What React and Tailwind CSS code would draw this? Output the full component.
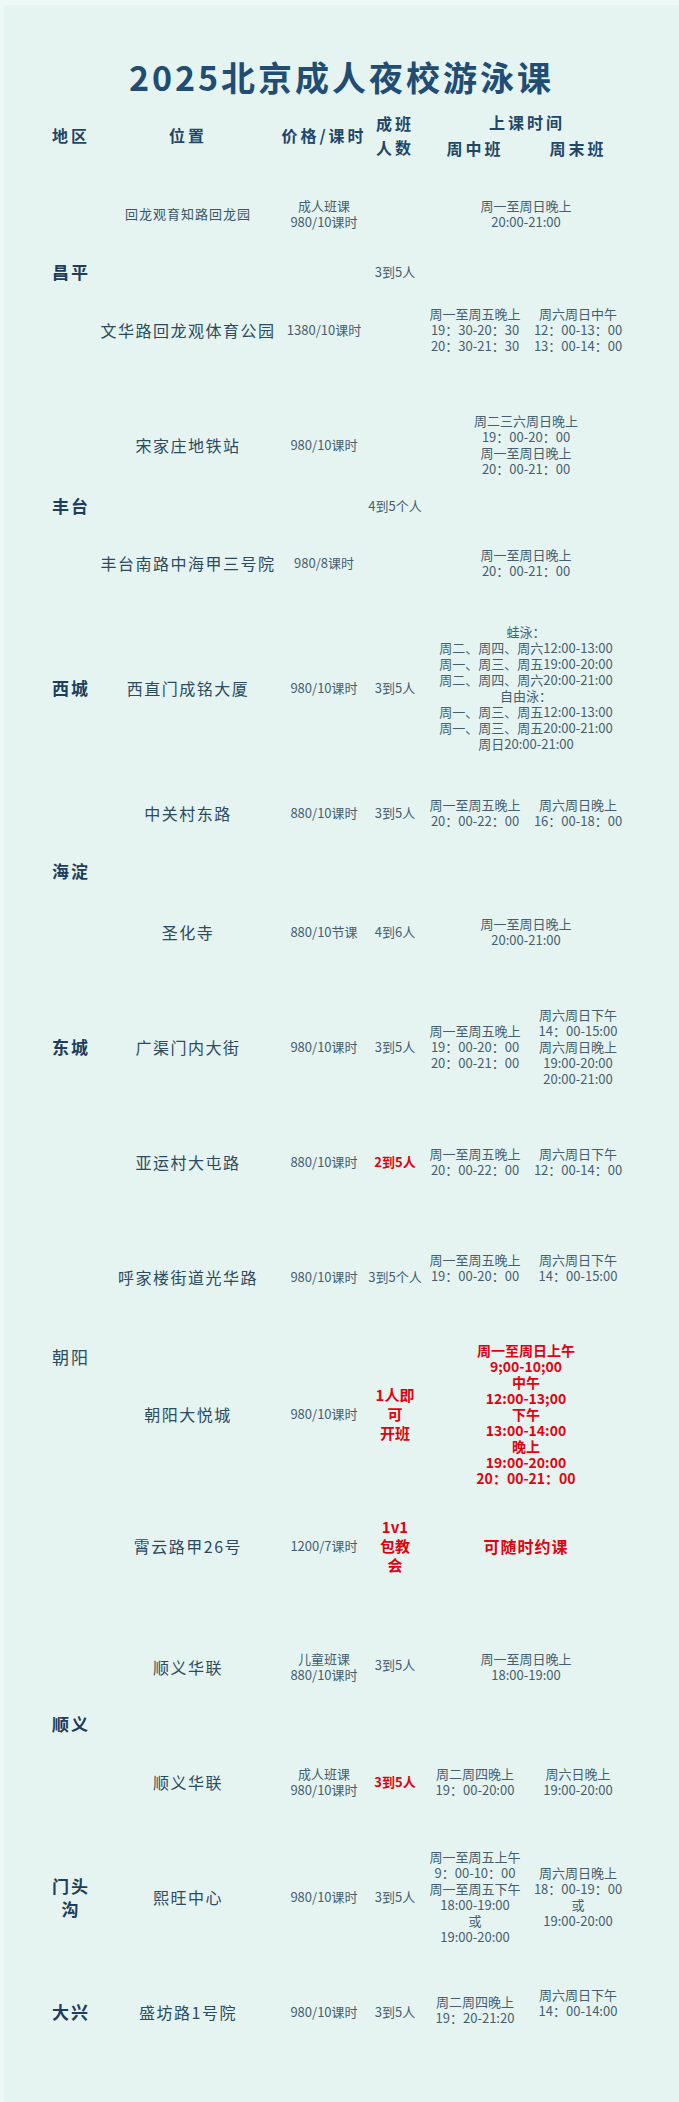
import React from "react";

const cell = "flex flex-col items-center justify-center text-center whitespace-nowrap";
const small = "text-[13px] leading-4 text-[#465e70]";
const place = "text-[16px] tracking-[1.5px] text-[#2c4a60]";
const region = "text-[17px] font-bold tracking-[2px] text-[#1d3e5c]";
const red = "font-bold text-[#e5000f]";

function Lines({ items, className = "" }) {
  return (
    <div className={`${cell} ${className}`}>
      {items.map((t, i) => (
        <div key={i}>{t}</div>
      ))}
    </div>
  );
}

export default function App() {
  return (
    <div className="min-h-[2102px] w-full bg-[#e5f4f0] border-t-[5px] border-l-[4px] border-[#eef8f5] pt-[52px] font-['Noto_Sans_CJK_SC',sans-serif]">
      {/* Title */}
      <h1 className="h-[40px] text-center text-[34px] font-bold leading-[40px] tracking-[3px] text-[#214d72]">
        2025北京成人夜校游泳课
      </h1>

      {/* Header */}
      <div className="mt-[13px] ml-[43px] grid h-[46px] grid-cols-[48px_186px_86px_56px_104px_102px] text-[16px] font-bold tracking-[3px] text-[#1f4768]">
        <div className={cell}>地区</div>
        <div className={cell}>位置</div>
        <div className={cell}>价格/课时</div>
        <div className={`${cell} leading-[24px]`}>
          <div>成班</div>
          <div>人数</div>
        </div>
        <div className="col-span-2 flex flex-col items-center justify-center leading-[24px]">
          <div className="pl-[2px]">上课时间</div>
          <div className="grid w-full grid-cols-[104px_102px] pt-[2px]">
            <div className="text-center">周中班</div>
            <div className="text-center">周末班</div>
          </div>
        </div>
      </div>

      {/* Table body */}
      <div className="ml-[43px] grid grid-cols-[48px_186px_86px_56px_104px_102px] grid-rows-[116px_115px_115px_122px_128px_122px_115px_115px_115px_126px_137px_127px_115px_115px_115px_116px]">
        {/* regions */}
        <div className={`${cell} ${region} col-start-1 row-start-1 row-span-2`}>昌平</div>
        <div className={`${cell} ${region} col-start-1 row-start-3 row-span-2`}>丰台</div>
        <div className={`${cell} ${region} col-start-1 row-start-5`}>西城</div>
        <div className={`${cell} ${region} col-start-1 row-start-6 row-span-2`}>海淀</div>
        <div className={`${cell} ${region} col-start-1 row-start-8`}>东城</div>
        <div className={`${cell} col-start-1 row-start-9 row-span-4 text-[17px] tracking-[2px] text-[#2c4a60]`}>朝阳</div>
        <div className={`${cell} ${region} col-start-1 row-start-13 row-span-2`}>顺义</div>
        <div className={`${cell} ${region} col-start-1 row-start-15 leading-[23px]`}>
          <div>门头</div>
          <div>沟</div>
        </div>
        <div className={`${cell} ${region} col-start-1 row-start-16`}>大兴</div>

        {/* row 1 */}
        <div className={`${cell} col-start-2 row-start-1 text-[13px] tracking-[1px] text-[#3a556a]`}>回龙观育知路回龙园</div>
        <Lines items={["成人班课", "980/10课时"]} className={`${small} col-start-3 row-start-1`} />
        <div className={`${cell} ${small} col-start-4 row-start-1 row-span-2`}>3到5人</div>
        <Lines items={["周一至周日晚上", "20:00-21:00"]} className={`${small} col-start-5 col-span-2 row-start-1`} />

        {/* row 2 */}
        <div className={`${cell} ${place} col-start-2 row-start-2`}>文华路回龙观体育公园</div>
        <div className={`${cell} ${small} col-start-3 row-start-2`}>1380/10课时</div>
        <Lines items={["周一至周五晚上", "19：30-20：30", "20：30-21：30"]} className={`${small} col-start-5 row-start-2`} />
        <Lines items={["周六周日中午", "12：00-13：00", "13：00-14：00"]} className={`${small} col-start-6 row-start-2`} />

        {/* row 3 */}
        <div className={`${cell} ${place} col-start-2 row-start-3`}>宋家庄地铁站</div>
        <div className={`${cell} ${small} col-start-3 row-start-3`}>980/10课时</div>
        <div className={`${cell} ${small} col-start-4 row-start-3 row-span-2`}>4到5个人</div>
        <Lines
          items={["周二三六周日晚上", "19：00-20：00", "周一至周日晚上", "20：00-21：00"]}
          className={`${small} col-start-5 col-span-2 row-start-3`}
        />

        {/* row 4 */}
        <div className={`${cell} ${place} col-start-2 row-start-4`}>丰台南路中海甲三号院</div>
        <div className={`${cell} ${small} col-start-3 row-start-4`}>980/8课时</div>
        <Lines items={["周一至周日晚上", "20：00-21：00"]} className={`${small} col-start-5 col-span-2 row-start-4`} />

        {/* row 5 */}
        <div className={`${cell} ${place} col-start-2 row-start-5`}>西直门成铭大厦</div>
        <div className={`${cell} ${small} col-start-3 row-start-5`}>980/10课时</div>
        <div className={`${cell} ${small} col-start-4 row-start-5`}>3到5人</div>
        <Lines
          items={[
            "蛙泳：",
            "周二、周四、周六12:00-13:00",
            "周一、周三、周五19:00-20:00",
            "周二、周四、周六20:00-21:00",
            "自由泳：",
            "周一、周三、周五12:00-13:00",
            "周一、周三、周五20:00-21:00",
            "周日20:00-21:00",
          ]}
          className={`${small} col-start-5 col-span-2 row-start-5`}
        />

        {/* row 6 */}
        <div className={`${cell} ${place} col-start-2 row-start-6`}>中关村东路</div>
        <div className={`${cell} ${small} col-start-3 row-start-6`}>880/10课时</div>
        <div className={`${cell} ${small} col-start-4 row-start-6`}>3到5人</div>
        <Lines items={["周一至周五晚上", "20：00-22：00"]} className={`${small} col-start-5 row-start-6`} />
        <Lines items={["周六周日晚上", "16：00-18：00"]} className={`${small} col-start-6 row-start-6`} />

        {/* row 7 */}
        <div className={`${cell} ${place} col-start-2 row-start-7`}>圣化寺</div>
        <div className={`${cell} ${small} col-start-3 row-start-7`}>880/10节课</div>
        <div className={`${cell} ${small} col-start-4 row-start-7`}>4到6人</div>
        <Lines items={["周一至周日晚上", "20:00-21:00"]} className={`${small} col-start-5 col-span-2 row-start-7`} />

        {/* row 8 */}
        <div className={`${cell} ${place} col-start-2 row-start-8`}>广渠门内大街</div>
        <div className={`${cell} ${small} col-start-3 row-start-8`}>980/10课时</div>
        <div className={`${cell} ${small} col-start-4 row-start-8`}>3到5人</div>
        <Lines items={["周一至周五晚上", "19：00-20：00", "20：00-21：00"]} className={`${small} col-start-5 row-start-8`} />
        <Lines
          items={["周六周日下午", "14：00-15:00", "周六周日晚上", "19:00-20:00", "20:00-21:00"]}
          className={`${small} col-start-6 row-start-8`}
        />

        {/* row 9 */}
        <div className={`${cell} ${place} col-start-2 row-start-9`}>亚运村大屯路</div>
        <div className={`${cell} ${small} col-start-3 row-start-9`}>880/10课时</div>
        <div className={`${cell} text-[13px] leading-4 ${red} col-start-4 row-start-9`}>2到5人</div>
        <Lines items={["周一至周五晚上", "20：00-22：00"]} className={`${small} col-start-5 row-start-9`} />
        <Lines items={["周六周日下午", "12：00-14：00"]} className={`${small} col-start-6 row-start-9`} />

        {/* row 10 */}
        <div className={`${cell} ${place} col-start-2 row-start-10 pb-[10px]`}>呼家楼街道光华路</div>
        <div className={`${cell} ${small} col-start-3 row-start-10 pb-[10px]`}>980/10课时</div>
        <div className={`${cell} ${small} col-start-4 row-start-10 pb-[10px]`}>3到5个人</div>
        <Lines items={["周一至周五晚上", "19：00-20：00"]} className={`${small} col-start-5 row-start-10 pb-[28px]`} />
        <Lines items={["周六周日下午", "14：00-15:00"]} className={`${small} col-start-6 row-start-10 pb-[28px]`} />

        {/* row 11 */}
        <div className={`${cell} ${place} col-start-2 row-start-11`}>朝阳大悦城</div>
        <div className={`${cell} ${small} col-start-3 row-start-11`}>980/10课时</div>
        <Lines items={["1人即", "可", "开班"]} className={`text-[15px] leading-[19px] ${red} col-start-4 row-start-11`} />
        <Lines
          items={[
            "周一至周日上午",
            "9;00-10;00",
            "中午",
            "12:00-13;00",
            "下午",
            "13:00-14:00",
            "晚上",
            "19:00-20:00",
            "20：00-21：00",
          ]}
          className={`text-[14px] leading-[16px] ${red} col-start-5 col-span-2 row-start-11`}
        />

        {/* row 12 */}
        <div className={`${cell} ${place} col-start-2 row-start-12`}>霄云路甲26号</div>
        <div className={`${cell} ${small} col-start-3 row-start-12`}>1200/7课时</div>
        <Lines items={["1v1", "包教", "会"]} className={`text-[15px] leading-[19px] ${red} col-start-4 row-start-12`} />
        <div className={`${cell} text-[16px] tracking-[1px] ${red} col-start-5 col-span-2 row-start-12`}>可随时约课</div>

        {/* row 13 */}
        <div className={`${cell} ${place} col-start-2 row-start-13`}>顺义华联</div>
        <Lines items={["儿童班课", "880/10课时"]} className={`${small} col-start-3 row-start-13`} />
        <div className={`${cell} ${small} col-start-4 row-start-13 pb-[4px]`}>3到5人</div>
        <Lines items={["周一至周日晚上", "18:00-19:00"]} className={`${small} col-start-5 col-span-2 row-start-13`} />

        {/* row 14 */}
        <div className={`${cell} ${place} col-start-2 row-start-14`}>顺义华联</div>
        <Lines items={["成人班课", "980/10课时"]} className={`${small} col-start-3 row-start-14`} />
        <div className={`${cell} text-[13px] leading-4 ${red} col-start-4 row-start-14`}>3到5人</div>
        <Lines items={["周二周四晚上", "19：00-20:00"]} className={`${small} col-start-5 row-start-14`} />
        <Lines items={["周六日晚上", "19:00-20:00"]} className={`${small} col-start-6 row-start-14`} />

        {/* row 15 */}
        <div className={`${cell} ${place} col-start-2 row-start-15`}>熙旺中心</div>
        <div className={`${cell} ${small} col-start-3 row-start-15`}>980/10课时</div>
        <div className={`${cell} ${small} col-start-4 row-start-15`}>3到5人</div>
        <Lines
          items={["周一至周五上午", "9：00-10：00", "周一至周五下午", "18:00-19:00", "或", "19:00-20:00"]}
          className={`${small} col-start-5 row-start-15`}
        />
        <Lines
          items={["周六周日晚上", "18：00-19：00", "或", "19:00-20:00"]}
          className={`${small} col-start-6 row-start-15`}
        />

        {/* row 16 */}
        <div className={`${cell} ${place} col-start-2 row-start-16`}>盛坊路1号院</div>
        <div className={`${cell} ${small} col-start-3 row-start-16`}>980/10课时</div>
        <div className={`${cell} ${small} col-start-4 row-start-16`}>3到5人</div>
        <Lines items={["周二周四晚上", "19：20-21:20"]} className={`${small} col-start-5 row-start-16 pb-[4px]`} />
        <Lines items={["周六周日下午", "14：00-14:00"]} className={`${small} col-start-6 row-start-16 pb-[18px]`} />
      </div>
    </div>
  );
}
